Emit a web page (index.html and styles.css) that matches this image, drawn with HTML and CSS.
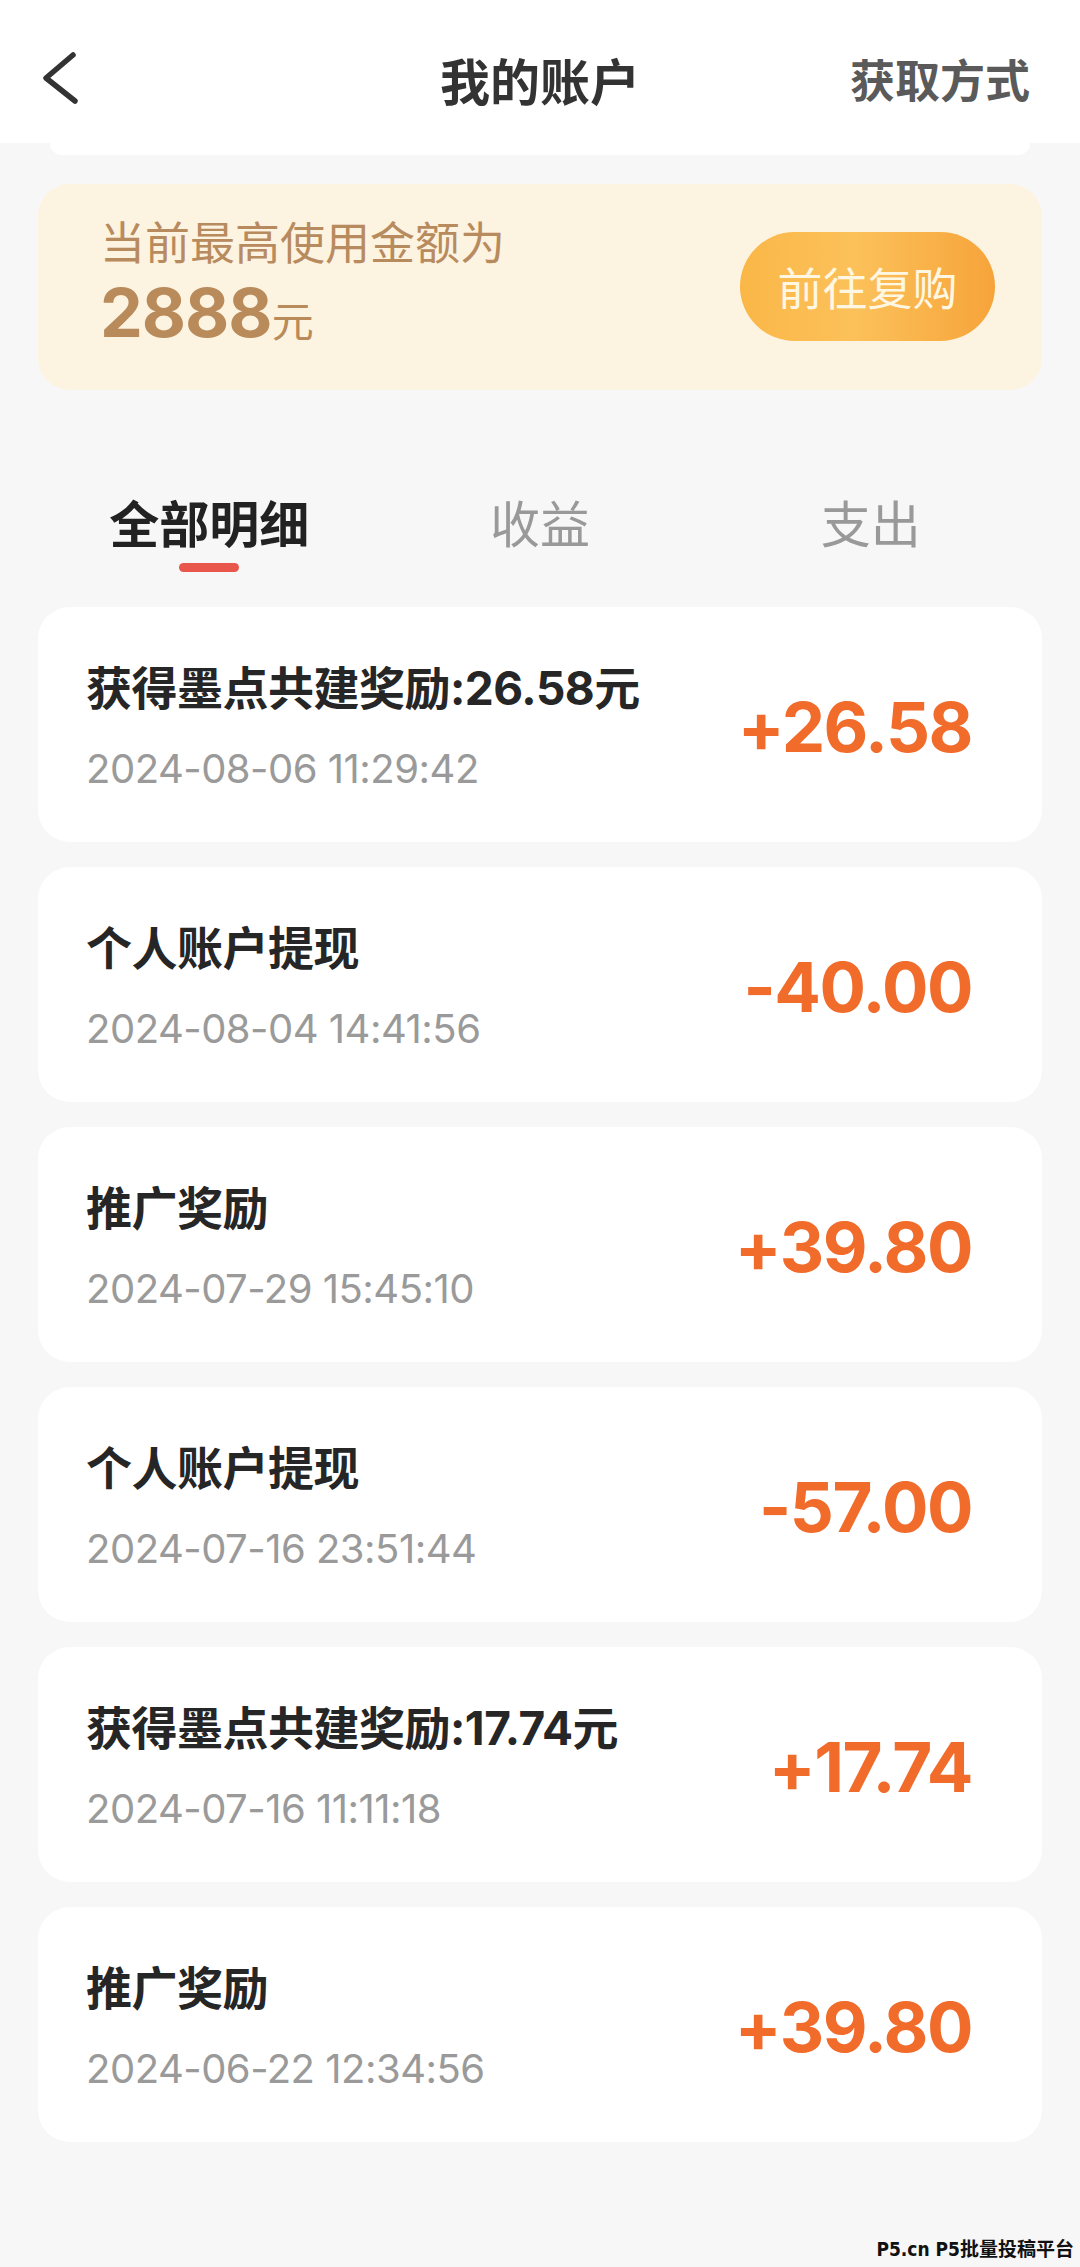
FILE: index.html
```
<!DOCTYPE html>
<html>
<head>
    <title>我的账户</title>
    <link rel="stylesheet" href="styles.css">
</head>
<body>
    <div class="page">
        <div class="header">
            <div class="back">
                <svg width="40" height="60" viewBox="0 0 40 60">
                    <polyline points="33,6 6,29 35,52" fill="none" stroke="#333" stroke-width="5.5" stroke-linecap="round" stroke-linejoin="round"/>
                </svg>
            </div>
            <div class="title">我的账户</div>
            <div class="header-link">获取方式</div>
        </div>
        <div class="peek"></div>

        <div class="banner">
            <div class="banner-text">
                <div class="banner-label">当前最高使用金额为</div>
                <div class="banner-amount">2888<span class="unit">元</span></div>
            </div>
            <div class="rebuy-btn">前往复购</div>
        </div>

        <div class="tabs">
            <div class="tab active">全部明细<span class="tab-line"></span></div>
            <div class="tab">收益</div>
            <div class="tab">支出</div>
        </div>

        <div class="list">
            <div class="record">
                <div class="record-info">
                    <div class="record-title">获得墨点共建奖励:26.58元</div>
                    <div class="record-time">2024-08-06 11:29:42</div>
                </div>
                <div class="record-amount">+26.58</div>
            </div>
            <div class="record">
                <div class="record-info">
                    <div class="record-title">个人账户提现</div>
                    <div class="record-time">2024-08-04 14:41:56</div>
                </div>
                <div class="record-amount">-40.00</div>
            </div>
            <div class="record">
                <div class="record-info">
                    <div class="record-title">推广奖励</div>
                    <div class="record-time">2024-07-29 15:45:10</div>
                </div>
                <div class="record-amount">+39.80</div>
            </div>
            <div class="record">
                <div class="record-info">
                    <div class="record-title">个人账户提现</div>
                    <div class="record-time">2024-07-16 23:51:44</div>
                </div>
                <div class="record-amount">-57.00</div>
            </div>
            <div class="record">
                <div class="record-info">
                    <div class="record-title">获得墨点共建奖励:17.74元</div>
                    <div class="record-time">2024-07-16 11:11:18</div>
                </div>
                <div class="record-amount">+17.74</div>
            </div>
            <div class="record">
                <div class="record-info">
                    <div class="record-title">推广奖励</div>
                    <div class="record-time">2024-06-22 12:34:56</div>
                </div>
                <div class="record-amount">+39.80</div>
            </div>
        </div>

        <div class="watermark">P5.cn P5批量投稿平台</div>
    </div>
</body>
</html>
```

FILE: styles.css
```
body {
    margin: 0;
    background: #f7f7f7;
    font-family: "Inter", "Noto Sans CJK SC", sans-serif;
}
.page {
    position: relative;
    min-height: 2267px;
}
.header {
    display: grid;
    grid-template-columns: 1fr auto 1fr;
    align-items: center;
    height: 143px;
    padding-top: 14px;
    box-sizing: border-box;
    background: #fff;
}
.back {
    padding-left: 40px;
    height: 60px;
}
.title {
    font-family: "Noto Sans CJK SC", sans-serif;
    font-size: 50px;
    font-weight: bold;
    color: #333;
}
.header-link {
    text-align: right;
    padding-right: 50px;
    font-family: "Noto Sans CJK SC", sans-serif;
    font-size: 45px;
    font-weight: bold;
    color: #5a5a5a;
}
.peek {
    height: 12px;
    margin: 0 50px;
    background: #fff;
    border-radius: 0 0 20px 20px;
}
.banner {
    display: flex;
    align-items: center;
    justify-content: space-between;
    height: 206px;
    margin: 29px 38px 0;
    padding: 0 47px 2px 62px;
    box-sizing: border-box;
    background: #fdf3e1;
    border-radius: 32px;
}
.banner-label {
    font-family: "Noto Sans CJK SC", sans-serif;
    font-size: 45px;
    line-height: 52px;
    color: #b88b5e;
}
.banner-amount {
    margin-top: 6px;
    font-size: 68px;
    line-height: 78px;
    font-weight: bold;
    color: #b98a5a;
    letter-spacing: -1px;
}
.banner-amount .unit {
    font-family: "Noto Sans CJK SC", sans-serif;
    font-size: 42px;
    font-weight: normal;
    letter-spacing: 0;
}
.rebuy-btn {
    width: 255px;
    height: 109px;
    border-radius: 55px;
    background: linear-gradient(90deg, #fab747, #fcc15a 45%, #f6a43a);
    color: #fff7e2;
    font-family: "Noto Sans CJK SC", sans-serif;
    font-size: 45px;
    display: flex;
    align-items: center;
    justify-content: center;
}
.tabs {
    display: flex;
    padding: 0 44px;
    margin-top: 101px;
}
.tab {
    flex: 1;
    display: flex;
    flex-direction: column;
    align-items: center;
    font-family: "Noto Sans CJK SC", sans-serif;
    font-size: 50px;
    line-height: 60px;
    color: #999;
}
.tab.active {
    color: #222;
    font-weight: bold;
}
.tab-line {
    width: 60px;
    height: 9px;
    margin-top: 12px;
    border-radius: 5px;
    background: #e9574c;
}
.list {
    display: flex;
    flex-direction: column;
    gap: 25px;
    margin: 35px 38px 0;
}
.record {
    display: flex;
    align-items: center;
    justify-content: space-between;
    height: 235px;
    padding: 4px 70px 0 48px;
    box-sizing: border-box;
    background: #fff;
    border-radius: 32px;
}
.record-title {
    font-size: 46px;
    line-height: 56px;
    font-weight: bold;
    color: #262626;
    letter-spacing: -0.5px;
}
.record-time {
    margin-top: 28px;
    font-size: 40px;
    line-height: 50px;
    color: #9a9a9a;
    letter-spacing: -0.5px;
}
.record-amount {
    font-size: 69px;
    font-weight: bold;
    color: #f16b2b;
    letter-spacing: -1.5px;
}
.watermark {
    position: absolute;
    right: 6px;
    bottom: 6px;
    font-family: "DejaVu Sans Condensed", "Noto Sans CJK SC", sans-serif;
    font-size: 19px;
    font-weight: bold;
    color: #111;
}
```
